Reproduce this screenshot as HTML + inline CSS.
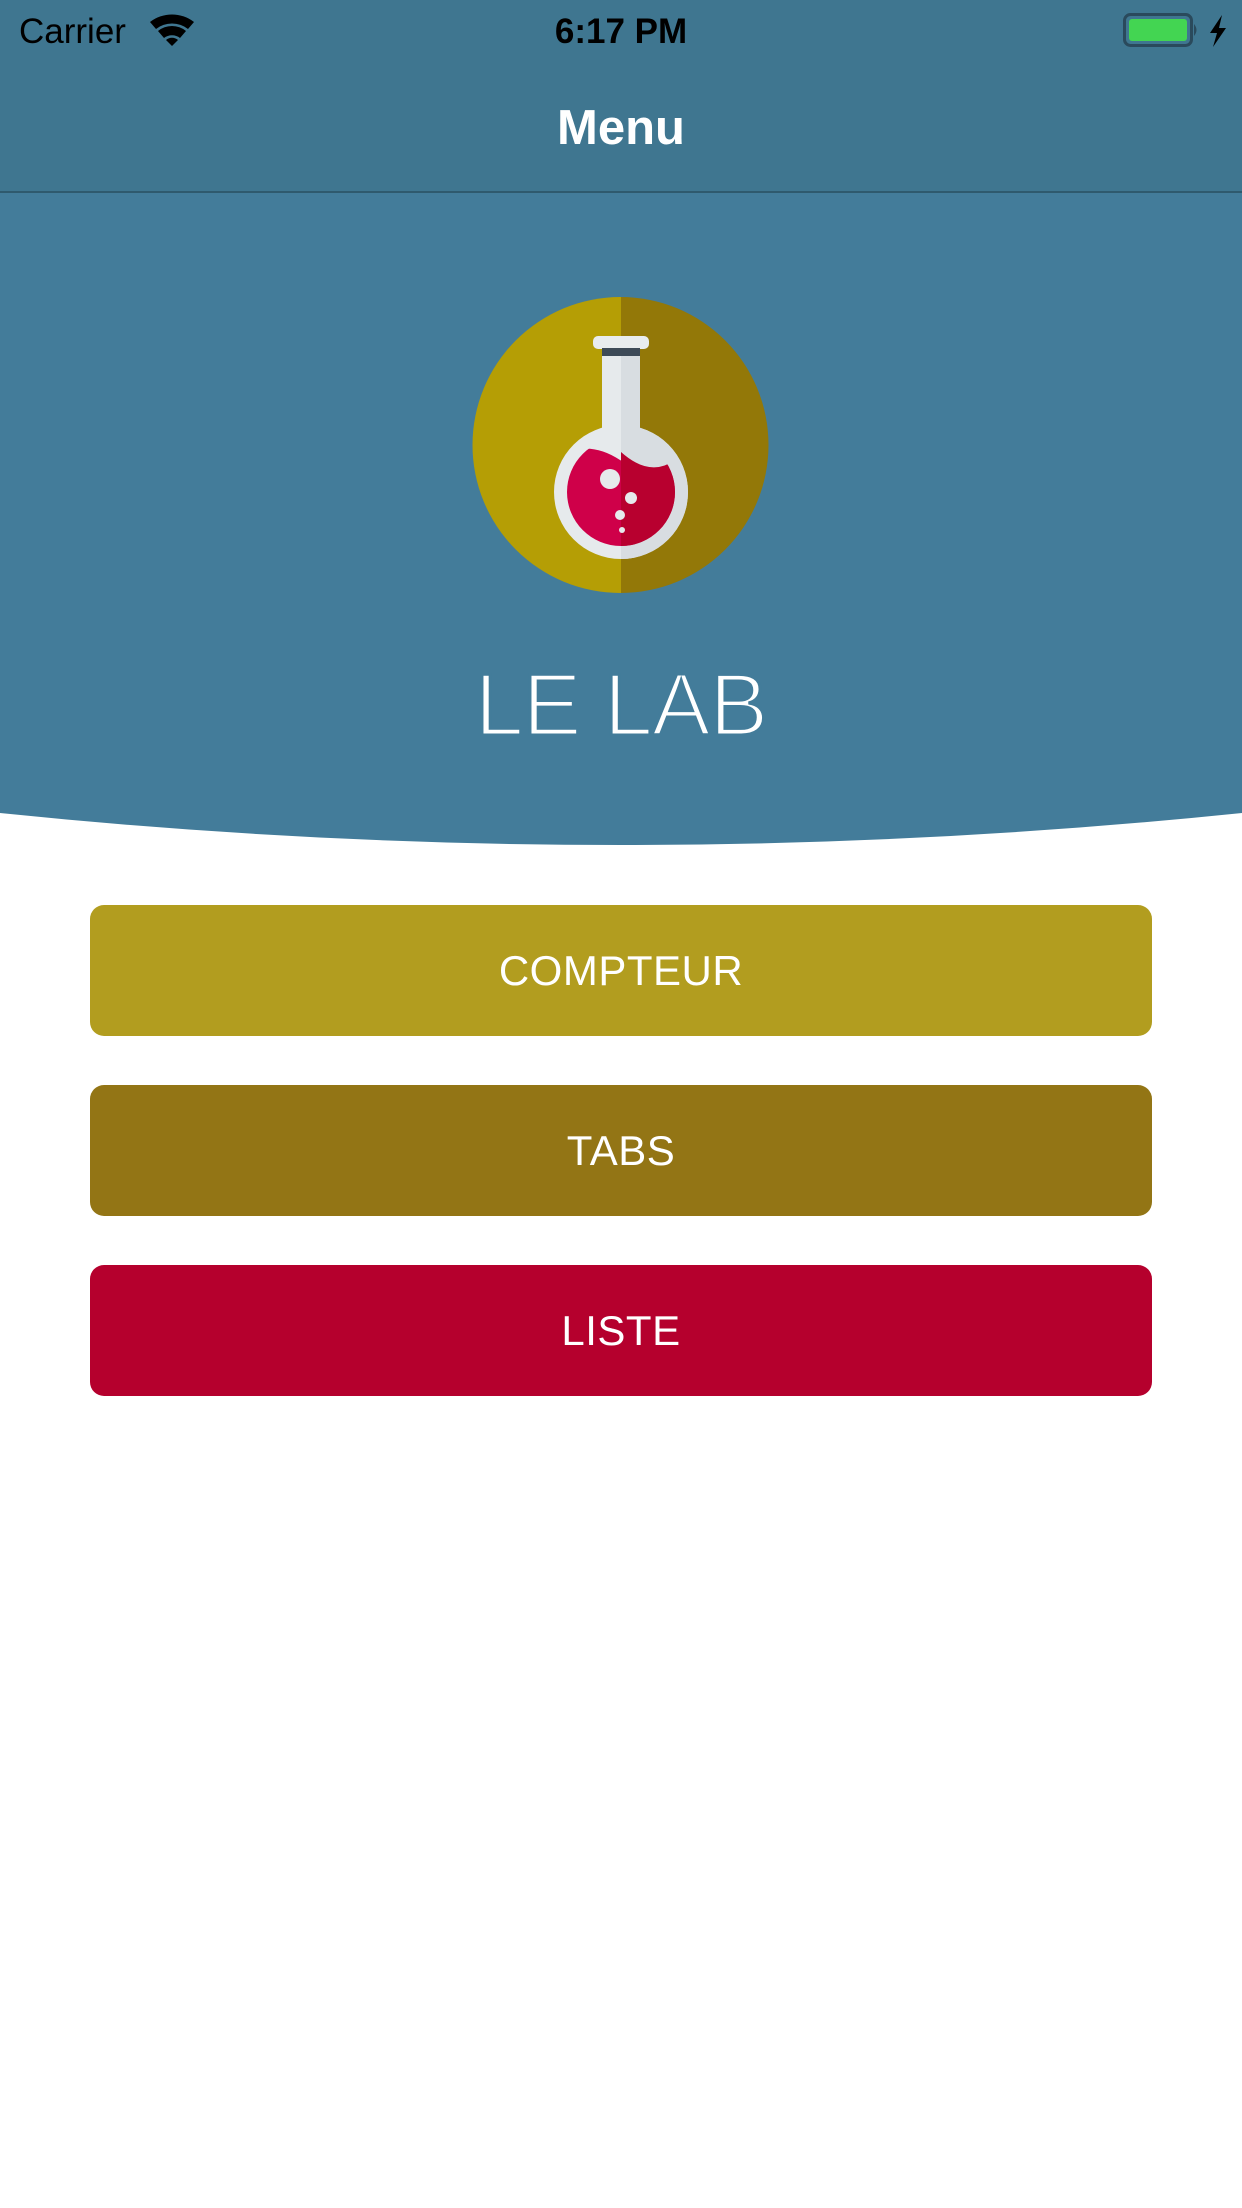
<!DOCTYPE html>
<html><head><meta charset="utf-8"><style>
html,body{margin:0;padding:0;width:1242px;height:2208px;background:#fff;overflow:hidden;font-family:"Liberation Sans",sans-serif;position:relative}
.abs{position:absolute}
.btn{position:absolute;left:90px;width:1062px;height:131px;border-radius:14px;color:#fff;font-size:42px;text-align:center;line-height:131px;letter-spacing:0.5px}
</style></head><body>
<svg class="abs" style="left:0;top:0" width="1242" height="900">
<rect x="0" y="0" width="1242" height="192" fill="#3f7690"/>
<path d="M0,192 H1242 V813 Q621,877 0,813 Z" fill="#437c9a"/>
<rect x="0" y="191" width="1242" height="2" fill="#2f5a6e"/>
<g fill="#000">
<path d="M150,22 A36,36 0 0 1 194,22 L188,29 A26,26 0 0 0 156,29 Z"/>
<path d="M158,31 A22,22 0 0 1 186,31 L180,38 A13,13 0 0 0 164,38 Z"/>
<path d="M166,40 A9,9 0 0 1 178,40 L172,46 Z"/>
</g>
<rect x="1124.5" y="14.5" width="67" height="31" rx="6" fill="none" stroke="#2a4a5c" stroke-width="3"/>
<rect x="1129" y="19" width="58" height="22" rx="3" fill="#43d552"/>
<path d="M1194,24 Q1199,30 1194,36 Z" fill="#2a4a5c"/>
<path d="M1222,15 L1210,33 L1217,33 L1213,47 L1226,28 L1219,28 Z" fill="#000"/>
<clipPath id="cc"><circle cx="620.5" cy="445" r="148"/></clipPath>
<g clip-path="url(#cc)">
<rect x="470" y="295" width="151" height="300" fill="#b59e05"/>
<rect x="621" y="295" width="150" height="300" fill="#937808"/>
</g>
<rect x="593" y="336" width="56" height="13" rx="5" fill="#e8ecee"/>
<rect x="602" y="348" width="38" height="8" fill="#3d4a57"/>
<rect x="602" y="356" width="38" height="80" fill="#e6eaec"/>
<rect x="621" y="356" width="19" height="80" fill="#d8dde1"/>
<circle cx="621" cy="492" r="67" fill="#e6eaec"/>
<path d="M621,425 A67,67 0 0 1 621,559 Z" fill="#d8dde1"/>
<rect x="602" y="420" width="38" height="20" fill="#e6eaec"/>
<rect x="621" y="420" width="19" height="20" fill="#d8dde1"/>
<clipPath id="lc"><circle cx="621" cy="492" r="54"/></clipPath>
<g clip-path="url(#lc)">
<path d="M560,455 Q590,440 620,460 Q650,478 675,460 L690,560 L560,560 Z" fill="#cf0049"/>
<path d="M621,452 Q650,478 675,460 L690,560 L621,560 Z" fill="#b8002f"/>
</g>
<circle cx="610" cy="479" r="10" fill="#e6eaec"/>
<circle cx="631" cy="498" r="6" fill="#e6eaec"/>
<circle cx="620" cy="515" r="5" fill="#e6eaec"/>
<circle cx="622" cy="530" r="3" fill="#e6eaec"/>
<text x="621" y="735" text-anchor="middle" font-family="Liberation Sans, sans-serif" font-size="88" letter-spacing="-1" fill="#fff" stroke="#437c9a" stroke-width="3">LE LAB</text>
</svg>
<div class="abs" style="left:19px;top:12px;font-size:35px;color:#000">Carrier</div>
<div class="abs" style="left:0;width:1242px;top:12px;text-align:center;font-size:35px;font-weight:bold;color:#000">6:17 PM</div>
<div class="abs" style="left:0;width:1242px;top:100px;text-align:center;font-size:49px;font-weight:bold;color:#fff">Menu</div>
<div class="btn" style="top:905px;background:#b29d1f">COMPTEUR</div>
<div class="btn" style="top:1085px;background:#937515">TABS</div>
<div class="btn" style="top:1265px;background:#b5002d">LISTE</div>
</body></html>
